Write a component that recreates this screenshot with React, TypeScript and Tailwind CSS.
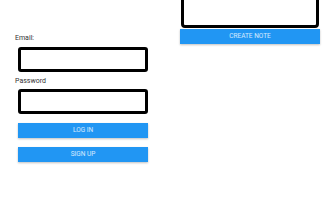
import React from "react";

export default function App() {
  return (
    <div className="w-[333px] h-[222px] bg-white flex overflow-hidden font-['Roboto',sans-serif]">
      <div className="w-[180px] shrink-0 pl-[15px] pt-[34px] flex flex-col">
        <div className="text-[7px] leading-[8px] text-[#333]">Email:</div>
        <div className="ml-[3px] mt-[5px] w-[130px] h-[25px] border-[3px] border-black rounded-[3px] bg-white" />
        <div className="mt-[5px] text-[7px] leading-[8px] text-[#333]">Password</div>
        <div className="ml-[3px] mt-[4px] w-[130px] h-[25px] border-[3px] border-black rounded-[3px] bg-white" />
        <button className="ml-[3px] mt-[9px] w-[130px] h-[15px] bg-[#2196F3] text-white/80 text-[6.5px] uppercase shadow-[0_1px_2px_rgba(0,0,0,0.25)] flex items-center justify-center">
          Log In
        </button>
        <button className="ml-[3px] mt-[9px] w-[130px] h-[15px] bg-[#2196F3] text-white/80 text-[6.5px] uppercase shadow-[0_1px_2px_rgba(0,0,0,0.25)] flex items-center justify-center">
          Sign Up
        </button>
      </div>
      <div className="flex flex-col">
        <div className="-mt-[30px] ml-[1px] w-[138px] h-[58px] border-[3px] border-black rounded-[4px] bg-white" />
        <button className="mt-[1px] w-[140px] h-[15px] bg-[#2196F3] text-white/80 text-[6.5px] uppercase shadow-[0_1px_2px_rgba(0,0,0,0.25)] flex items-center justify-center">
          Create Note
        </button>
      </div>
    </div>
  );
}
